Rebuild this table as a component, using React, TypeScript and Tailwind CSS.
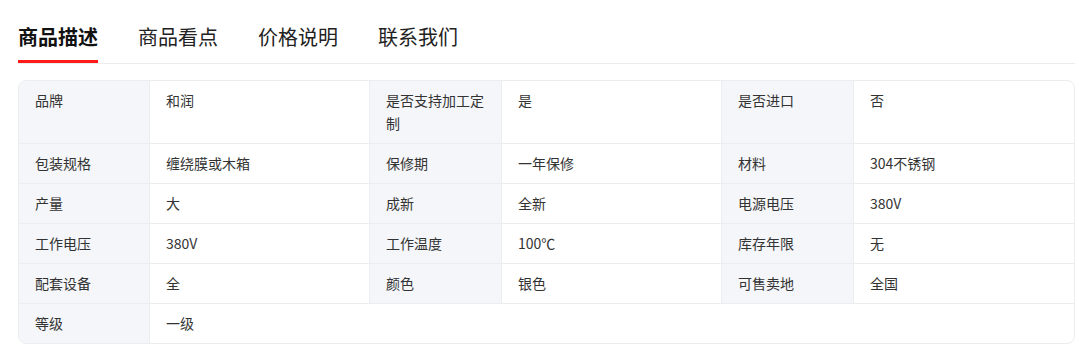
import React from 'react';

const tabs = ['商品描述', '商品看点', '价格说明', '联系我们'];

const rows: [string, string][][] = [
  [
    ['品牌', '和润'],
    ['是否支持加工定制', '是'],
    ['是否进口', '否'],
  ],
  [
    ['包装规格', '缠绕膜或木箱'],
    ['保修期', '一年保修'],
    ['材料', '304不锈钢'],
  ],
  [
    ['产量', '大'],
    ['成新', '全新'],
    ['电源电压', '380V'],
  ],
  [
    ['工作电压', '380V'],
    ['工作温度', '100℃'],
    ['库存年限', '无'],
  ],
  [
    ['配套设备', '全'],
    ['颜色', '银色'],
    ['可售卖地', '全国'],
  ],
];

const labelCls = 'bg-[#f5f6f9] border-r border-b border-[#ebedf0] px-4 py-2 text-[#333]';
const valueCls = 'border-b border-[#ebedf0] px-4 py-2 text-[#333]';

const App: React.FC = () => {
  return (
    <div
      className="w-[1079px] h-[351px] bg-white pl-[18px] pr-[4px] pt-[23px]"
      style={{ fontFamily: '"Microsoft YaHei", "Noto Sans CJK SC", "Liberation Sans", sans-serif' }}
    >
      {/* Tabs */}
      <div className="flex gap-10 border-b border-[#ececec]">
        {tabs.map((t, i) => (
          <div key={t} className="flex flex-col">
            <span
              className={
                i === 0
                  ? 'text-[20px] leading-[28px] font-bold text-[#111]'
                  : 'text-[20px] leading-[28px] text-[#222]'
              }
            >
              {t}
            </span>
            <div className={i === 0 ? 'mt-[9px] h-[3px] bg-[#ff1a1a]' : 'mt-[9px] h-[3px]'} />
          </div>
        ))}
      </div>

      {/* Spec table */}
      <div className="mt-4 w-[1057px] border border-[#ebedf0] rounded-lg overflow-hidden text-sm leading-[23px]">
        <div className="grid grid-cols-[131px_220px_132px_220px_132px_1fr]">
          {rows.map((row, ri) =>
            row.map(([k, v], ci) => (
              <React.Fragment key={`${ri}-${ci}`}>
                <div className={labelCls}>{k}</div>
                <div className={ci < 2 ? `${valueCls} border-r` : valueCls}>{v}</div>
              </React.Fragment>
            ))
          )}
          <div className="bg-[#f5f6f9] border-r border-[#ebedf0] px-4 py-2 text-[#333]">等级</div>
          <div className="col-span-5 px-4 py-2 text-[#333]">一级</div>
        </div>
      </div>
    </div>
  );
};

export default App;
